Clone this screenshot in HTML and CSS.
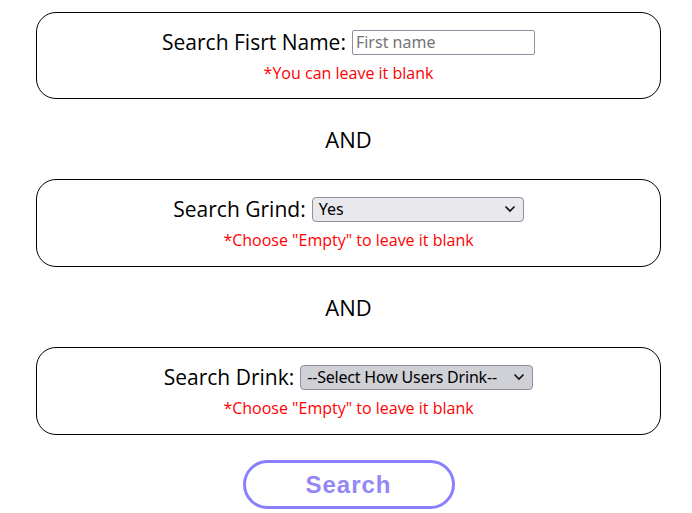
FILE: index.html
```html
<!DOCTYPE html>
<html>
<head>
<meta charset="utf-8">
<link rel="stylesheet" href="styles.css">
</head>
<body>
<form class="search-form">
  <div class="box">
    <div class="row">
      <label class="label" for="fname">Search Fisrt Name:</label>
      <input class="field text-field" id="fname" type="text" placeholder="First name">
    </div>
    <p class="hint">*You can leave it blank</p>
  </div>
  <div class="and">AND</div>
  <div class="box">
    <div class="row">
      <label class="label" for="grind">Search Grind:</label>
      <div class="select grind-select" id="grind"><span>Yes</span><svg class="chev" viewBox="0 0 12 8"><path d="M1.5 1.5 L6 6 L10.5 1.5" fill="none" stroke="#111" stroke-width="1.6"/></svg></div>
    </div>
    <p class="hint">*Choose "Empty" to leave it blank</p>
  </div>
  <div class="and">AND</div>
  <div class="box">
    <div class="row">
      <label class="label" for="drink">Search Drink:</label>
      <div class="select drink-select" id="drink"><span>--Select How Users Drink--</span><svg class="chev" viewBox="0 0 12 8"><path d="M1.5 1.5 L6 6 L10.5 1.5" fill="none" stroke="#111" stroke-width="1.6"/></svg></div>
    </div>
    <p class="hint">*Choose "Empty" to leave it blank</p>
  </div>
  <div class="btn-row">
    <button class="search-btn" type="button">Search</button>
  </div>
</form>
</body>
</html>
```
FILE: styles.css
```css
html, body {
  margin: 0;
  padding: 0;
  background: #fff;
}
body {
  font-family: "Open Sans", "Noto Sans", sans-serif;
  color: #000;
}
.search-form {
  width: 625px;
  margin: 12px 0 0 36px;
}
.box {
  box-sizing: border-box;
  height: 87px;
  border: 1px solid #000;
  border-radius: 20px;
  padding-top: 16px;
}
.row {
  display: flex;
  justify-content: center;
  align-items: center;
  height: 26px;
  gap: 6px;
}
.label {
  font-size: 21px;
  line-height: 26px;
}
.field {
  box-sizing: border-box;
  height: 25px;
  border: 1px solid #8f8f9d;
  border-radius: 2px;
  font-family: "Noto Sans", sans-serif;
  font-size: 16px;
  padding: 0 3px;
}
.text-field {
  width: 183px;
  outline: none;
}
.text-field::placeholder {
  color: #757575;
}
.select {
  box-sizing: border-box;
  height: 25px;
  display: flex;
  align-items: center;
  justify-content: space-between;
  border: 1px solid #8f8f9d;
  border-radius: 4px;
  font-family: "Noto Sans", sans-serif;
  font-size: 16px;
  padding: 0 7px 0 6px;
  color: #000;
}
.grind-select {
  width: 212px;
  background: #e9e9ed;
}
.drink-select {
  width: 233px;
  background: #d0d0d7;
  letter-spacing: -0.2px;
}
.chev {
  width: 12px;
  height: 8px;
}
.hint {
  margin: 8px 0 0;
  text-align: center;
  color: #ff0000;
  font-size: 16px;
  line-height: 20px;
}
.and {
  height: 80px;
  display: flex;
  align-items: center;
  justify-content: center;
  font-size: 22px;
}
.and + .box {
  height: 88px;
}
.btn-row {
  display: flex;
  justify-content: center;
  margin-top: 25px;
}
.search-btn {
  box-sizing: border-box;
  width: 212px;
  height: 49px;
  border: 3px solid #8a80ff;
  border-radius: 25px;
  background: #fff;
  color: #9387f5;
  font-family: "Liberation Sans", Arial, sans-serif;
  font-weight: bold;
  font-size: 24px;
  letter-spacing: 1px;
}
```
